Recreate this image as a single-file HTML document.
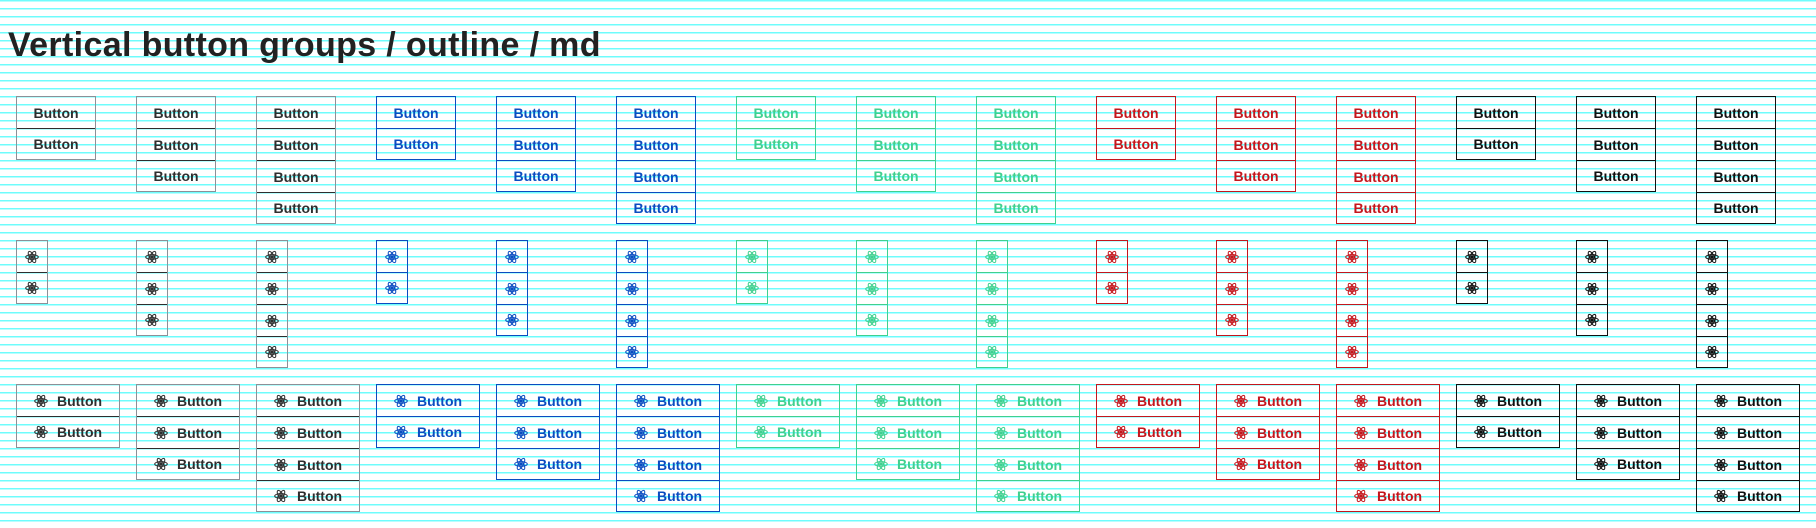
<!DOCTYPE html>
<html><head><meta charset="utf-8"><style>
*{box-sizing:border-box;margin:0;padding:0}
body{width:1816px;height:528px;overflow:hidden;background:#fff repeating-linear-gradient(to bottom,#6ffcfc 0,#6ffcfc 1.5px,#fff 1.5px,#fff 8px);font-family:"Liberation Sans",sans-serif;position:relative}
h1{position:absolute;left:8px;top:26px;font-size:34px;font-weight:bold;color:#222;letter-spacing:0.35px;white-space:nowrap}
.g{position:absolute;border:1px solid currentColor;display:flex;flex-direction:column}
.g div{height:32px;display:flex;align-items:center;justify-content:center;gap:9px;font-size:14px;font-weight:bold;border-top:1px solid currentColor}
.g div:first-child{border-top:none;height:31px}
.g div:last-child{height:31px}
.t{width:80px}.i{width:32px}.b{width:104px}
.gr{color:#8c9097}.gr div{color:#2e2e2e}
.bl{color:#0b4cc0}.gn{color:#40d08f}.rd{color:#c4161c}.bk{color:#111}
svg.a{width:14px;height:14px;flex:none}
</style></head><body>
<svg width="0" height="0" style="position:absolute"><defs><g id="a" fill="none" stroke="currentColor" stroke-width="1"><ellipse cx="7" cy="7" rx="6.3" ry="2.4"/><ellipse cx="7" cy="7" rx="6.3" ry="2.4" transform="rotate(60 7 7)"/><ellipse cx="7" cy="7" rx="6.3" ry="2.4" transform="rotate(120 7 7)"/><circle cx="7" cy="7" r="1.3" fill="currentColor"/></g></defs></svg>
<h1>Vertical button groups / outline / md</h1>

<!-- Row 1 -->
<div class="g t gr" style="left:16px;top:96px;height:64px"><div>Button</div><div>Button</div></div>
<div class="g t gr" style="left:136px;top:96px;height:96px"><div>Button</div><div>Button</div><div>Button</div></div>
<div class="g t gr" style="left:256px;top:96px;height:128px"><div>Button</div><div>Button</div><div>Button</div><div>Button</div></div>
<div class="g t bl" style="left:376px;top:96px;height:64px"><div>Button</div><div>Button</div></div>
<div class="g t bl" style="left:496px;top:96px;height:96px"><div>Button</div><div>Button</div><div>Button</div></div>
<div class="g t bl" style="left:616px;top:96px;height:128px"><div>Button</div><div>Button</div><div>Button</div><div>Button</div></div>
<div class="g t gn" style="left:736px;top:96px;height:64px"><div>Button</div><div>Button</div></div>
<div class="g t gn" style="left:856px;top:96px;height:96px"><div>Button</div><div>Button</div><div>Button</div></div>
<div class="g t gn" style="left:976px;top:96px;height:128px"><div>Button</div><div>Button</div><div>Button</div><div>Button</div></div>
<div class="g t rd" style="left:1096px;top:96px;height:64px"><div>Button</div><div>Button</div></div>
<div class="g t rd" style="left:1216px;top:96px;height:96px"><div>Button</div><div>Button</div><div>Button</div></div>
<div class="g t rd" style="left:1336px;top:96px;height:128px"><div>Button</div><div>Button</div><div>Button</div><div>Button</div></div>
<div class="g t bk" style="left:1456px;top:96px;height:64px"><div>Button</div><div>Button</div></div>
<div class="g t bk" style="left:1576px;top:96px;height:96px"><div>Button</div><div>Button</div><div>Button</div></div>
<div class="g t bk" style="left:1696px;top:96px;height:128px"><div>Button</div><div>Button</div><div>Button</div><div>Button</div></div>

<!-- Row 2 -->
<div class="g i gr" style="left:16px;top:240px;height:64px"><div><svg class="a"><use href="#a"/></svg></div><div><svg class="a"><use href="#a"/></svg></div></div>
<div class="g i gr" style="left:136px;top:240px;height:96px"><div><svg class="a"><use href="#a"/></svg></div><div><svg class="a"><use href="#a"/></svg></div><div><svg class="a"><use href="#a"/></svg></div></div>
<div class="g i gr" style="left:256px;top:240px;height:128px"><div><svg class="a"><use href="#a"/></svg></div><div><svg class="a"><use href="#a"/></svg></div><div><svg class="a"><use href="#a"/></svg></div><div><svg class="a"><use href="#a"/></svg></div></div>
<div class="g i bl" style="left:376px;top:240px;height:64px"><div><svg class="a"><use href="#a"/></svg></div><div><svg class="a"><use href="#a"/></svg></div></div>
<div class="g i bl" style="left:496px;top:240px;height:96px"><div><svg class="a"><use href="#a"/></svg></div><div><svg class="a"><use href="#a"/></svg></div><div><svg class="a"><use href="#a"/></svg></div></div>
<div class="g i bl" style="left:616px;top:240px;height:128px"><div><svg class="a"><use href="#a"/></svg></div><div><svg class="a"><use href="#a"/></svg></div><div><svg class="a"><use href="#a"/></svg></div><div><svg class="a"><use href="#a"/></svg></div></div>
<div class="g i gn" style="left:736px;top:240px;height:64px"><div><svg class="a"><use href="#a"/></svg></div><div><svg class="a"><use href="#a"/></svg></div></div>
<div class="g i gn" style="left:856px;top:240px;height:96px"><div><svg class="a"><use href="#a"/></svg></div><div><svg class="a"><use href="#a"/></svg></div><div><svg class="a"><use href="#a"/></svg></div></div>
<div class="g i gn" style="left:976px;top:240px;height:128px"><div><svg class="a"><use href="#a"/></svg></div><div><svg class="a"><use href="#a"/></svg></div><div><svg class="a"><use href="#a"/></svg></div><div><svg class="a"><use href="#a"/></svg></div></div>
<div class="g i rd" style="left:1096px;top:240px;height:64px"><div><svg class="a"><use href="#a"/></svg></div><div><svg class="a"><use href="#a"/></svg></div></div>
<div class="g i rd" style="left:1216px;top:240px;height:96px"><div><svg class="a"><use href="#a"/></svg></div><div><svg class="a"><use href="#a"/></svg></div><div><svg class="a"><use href="#a"/></svg></div></div>
<div class="g i rd" style="left:1336px;top:240px;height:128px"><div><svg class="a"><use href="#a"/></svg></div><div><svg class="a"><use href="#a"/></svg></div><div><svg class="a"><use href="#a"/></svg></div><div><svg class="a"><use href="#a"/></svg></div></div>
<div class="g i bk" style="left:1456px;top:240px;height:64px"><div><svg class="a"><use href="#a"/></svg></div><div><svg class="a"><use href="#a"/></svg></div></div>
<div class="g i bk" style="left:1576px;top:240px;height:96px"><div><svg class="a"><use href="#a"/></svg></div><div><svg class="a"><use href="#a"/></svg></div><div><svg class="a"><use href="#a"/></svg></div></div>
<div class="g i bk" style="left:1696px;top:240px;height:128px"><div><svg class="a"><use href="#a"/></svg></div><div><svg class="a"><use href="#a"/></svg></div><div><svg class="a"><use href="#a"/></svg></div><div><svg class="a"><use href="#a"/></svg></div></div>

<!-- Row 3 -->
<div class="g b gr" style="left:16px;top:384px;height:64px"><div><svg class="a"><use href="#a"/></svg>Button</div><div><svg class="a"><use href="#a"/></svg>Button</div></div>
<div class="g b gr" style="left:136px;top:384px;height:96px"><div><svg class="a"><use href="#a"/></svg>Button</div><div><svg class="a"><use href="#a"/></svg>Button</div><div><svg class="a"><use href="#a"/></svg>Button</div></div>
<div class="g b gr" style="left:256px;top:384px;height:128px"><div><svg class="a"><use href="#a"/></svg>Button</div><div><svg class="a"><use href="#a"/></svg>Button</div><div><svg class="a"><use href="#a"/></svg>Button</div><div><svg class="a"><use href="#a"/></svg>Button</div></div>
<div class="g b bl" style="left:376px;top:384px;height:64px"><div><svg class="a"><use href="#a"/></svg>Button</div><div><svg class="a"><use href="#a"/></svg>Button</div></div>
<div class="g b bl" style="left:496px;top:384px;height:96px"><div><svg class="a"><use href="#a"/></svg>Button</div><div><svg class="a"><use href="#a"/></svg>Button</div><div><svg class="a"><use href="#a"/></svg>Button</div></div>
<div class="g b bl" style="left:616px;top:384px;height:128px"><div><svg class="a"><use href="#a"/></svg>Button</div><div><svg class="a"><use href="#a"/></svg>Button</div><div><svg class="a"><use href="#a"/></svg>Button</div><div><svg class="a"><use href="#a"/></svg>Button</div></div>
<div class="g b gn" style="left:736px;top:384px;height:64px"><div><svg class="a"><use href="#a"/></svg>Button</div><div><svg class="a"><use href="#a"/></svg>Button</div></div>
<div class="g b gn" style="left:856px;top:384px;height:96px"><div><svg class="a"><use href="#a"/></svg>Button</div><div><svg class="a"><use href="#a"/></svg>Button</div><div><svg class="a"><use href="#a"/></svg>Button</div></div>
<div class="g b gn" style="left:976px;top:384px;height:128px"><div><svg class="a"><use href="#a"/></svg>Button</div><div><svg class="a"><use href="#a"/></svg>Button</div><div><svg class="a"><use href="#a"/></svg>Button</div><div><svg class="a"><use href="#a"/></svg>Button</div></div>
<div class="g b rd" style="left:1096px;top:384px;height:64px"><div><svg class="a"><use href="#a"/></svg>Button</div><div><svg class="a"><use href="#a"/></svg>Button</div></div>
<div class="g b rd" style="left:1216px;top:384px;height:96px"><div><svg class="a"><use href="#a"/></svg>Button</div><div><svg class="a"><use href="#a"/></svg>Button</div><div><svg class="a"><use href="#a"/></svg>Button</div></div>
<div class="g b rd" style="left:1336px;top:384px;height:128px"><div><svg class="a"><use href="#a"/></svg>Button</div><div><svg class="a"><use href="#a"/></svg>Button</div><div><svg class="a"><use href="#a"/></svg>Button</div><div><svg class="a"><use href="#a"/></svg>Button</div></div>
<div class="g b bk" style="left:1456px;top:384px;height:64px"><div><svg class="a"><use href="#a"/></svg>Button</div><div><svg class="a"><use href="#a"/></svg>Button</div></div>
<div class="g b bk" style="left:1576px;top:384px;height:96px"><div><svg class="a"><use href="#a"/></svg>Button</div><div><svg class="a"><use href="#a"/></svg>Button</div><div><svg class="a"><use href="#a"/></svg>Button</div></div>
<div class="g b bk" style="left:1696px;top:384px;height:128px"><div><svg class="a"><use href="#a"/></svg>Button</div><div><svg class="a"><use href="#a"/></svg>Button</div><div><svg class="a"><use href="#a"/></svg>Button</div><div><svg class="a"><use href="#a"/></svg>Button</div></div>
</body></html>
